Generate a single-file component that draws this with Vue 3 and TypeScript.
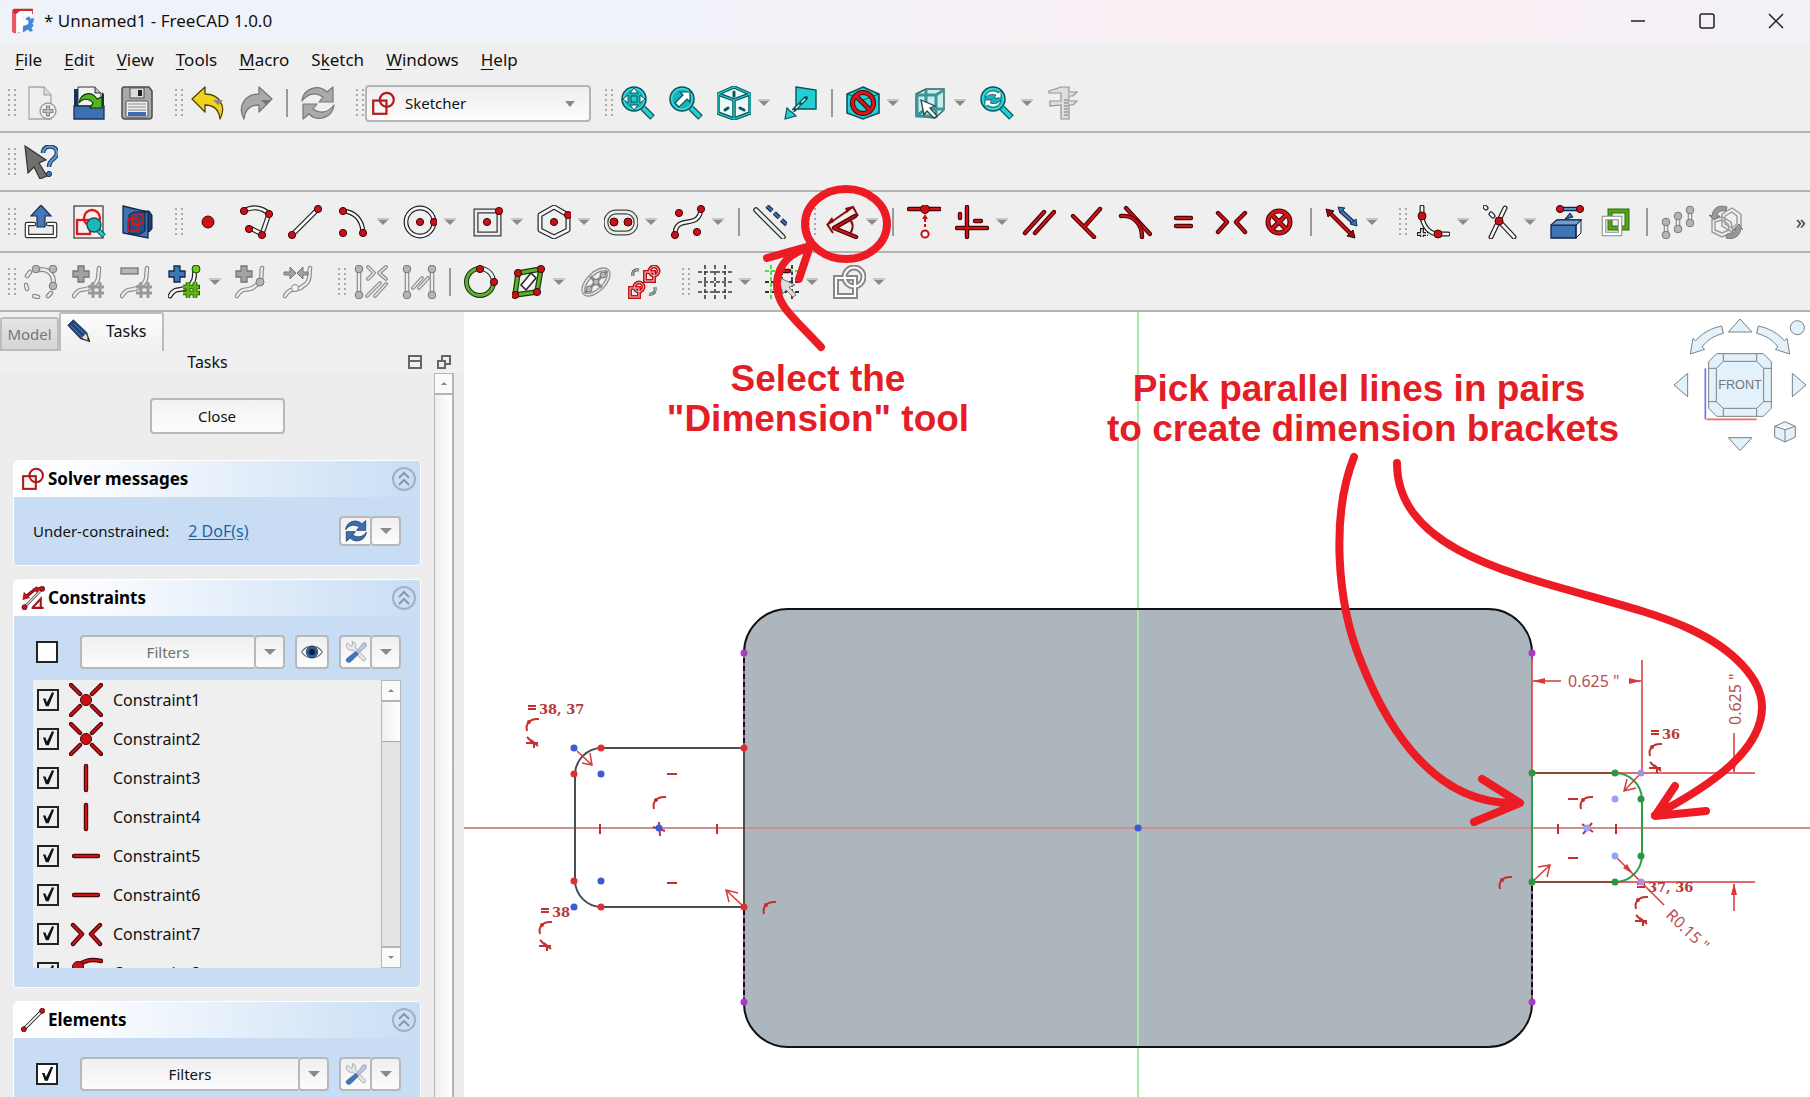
<script setup lang="ts">
import { ref } from 'vue'

type Tool =
  | { kind: 'grip' }
  | { kind: 'sep' }
  | { kind: 'combo' }
  | { kind: 'tool'; icon: string; label: string; menu?: boolean }

const grip: Tool = { kind: 'grip' }
const sep: Tool = { kind: 'sep' }
const tool = (icon: string, label: string, menu = false): Tool => ({ kind: 'tool', icon, label, menu })

// Drawing helpers shared by the icon set (34 x 34 grid)
const RED = '#cc1016'
const GRAY = '#a3a3a3'
const TEAL = '#22cfd4'
const DTEAL = '#0b5458'
const tube = (d: string, fill = '#f6f6f6', edge = '#222', w = 5) =>
  `<g fill="none" stroke-linecap="round" stroke-linejoin="round"><path d="${d}" stroke="${edge}" stroke-width="${w}"/><path d="${d}" stroke="${fill}" stroke-width="${w - 2.4}"/></g>`
const dot = (x: number, y: number, r = 3.6, fill = RED, edge = '#3a0608') =>
  `<circle cx="${x}" cy="${y}" r="${r}" fill="${fill}" stroke="${edge}" stroke-width="1"/>`
const bar = (d: string) => tube(d, '#cc1318', '#4d0407', 4.4)
const lens = `<path d="M22 22L31.500 31.500" stroke="${DTEAL}" stroke-width="6.500"/><path d="M22 22L30.800 30.800" stroke="${TEAL}" stroke-width="4"/><circle cx="13" cy="13" r="12" fill="${TEAL}" stroke="${DTEAL}" stroke-width="1.500"/><circle cx="13" cy="13" r="10.200" fill="#17b3b8" stroke="#7ff" stroke-opacity=".5"/>`
const cycle = (fill: string, edge: string) =>
  `<g fill="${fill}" stroke="${edge}" stroke-width="1.200" stroke-linejoin="round"><path d="M1 15C2 3 17-3 26 6L32 1V16H18L22 11C15 6 7 7 1 15Z"/><path d="M33 19C32 31 17 37 8 28L2 33V18H16L12 23C19 28 27 27 33 19Z"/></g>`
const grid = (fill: string, x: number, y: number) =>
  `<g transform="translate(${x} ${y})" stroke="${fill}" stroke-width="3"><path d="M5 0V16M12 0V16M0 5H16M0 11H16"/></g>`
const curve = 'M2 31C8 20 14 28 20 21C28 17 26 10 27 3'
const plus = (fill: string, edge: string) =>
  `<path d="M6 1H12V6H17V12H12V17H6V12H1V6H6Z" fill="${fill}" stroke="${edge}" stroke-width="1.300"/>`
const gdot = (x: number, y: number, r = 3.8) => dot(x, y, r, '#b5b5b5', '#777')
const gtube = (d: string, w = 4.6) => tube(d, '#ededed', '#8d8d8d', w)
const sketcher = `<g fill="none" stroke="#b41a1e" stroke-width="3"><rect x="3" y="13" width="18" height="18"/><circle cx="21.500" cy="12" r="9.500"/></g>`

const icons: Record<string, string> = {
  app: `<path d="M3 4Q3 1 6 1H30V8L24 9H13V32H5Q3 32 3 29Z" fill="#cb2b33"/><path d="M3 28V5L9 9V33H6Q3 33 3 28Z" fill="#f0575f"/><path d="M8 8L13 4H29V10H16V16H24V22H16V30L8 33Z" fill="#fff"/><path d="M21 13L25 11L27 14L31 13V18L29 20L31 23L28 26L30 30L26 31L24 28L20 30L17 32V24L24 21V16H21Z" fill="#3f86dc"/>`,
  fileNew: `<path d="M5 1H20L27 9V33H5Z" fill="#eee" stroke="#a8a8a8" stroke-width="1.300"/><path d="M20 1V9H27" fill="#ddd" stroke="#999"/><circle cx="24" cy="25" r="8" fill="#eee" stroke="#999" stroke-width="1.300"/><path d="M18.500 25H29.500M24 19.500V30.500" stroke="#888" stroke-width="4"/><path d="M19.500 25H28.500M24 20.500V29.500" stroke="#ccc" stroke-width="1.500"/>`,
  open: `<path d="M2 3H7V33H2Z" fill="#16335d"/><path d="M30 6L32 8V33H2V18H30Z" fill="#16335d"/><path d="M6 1H23L29 7V20H6Z" fill="#f2f2f2" stroke="#333"/><path d="M23 1V7H29" fill="#bbb" stroke="#333"/><path d="M2 20H32V33H2Z" fill="#3d70b0" stroke="#16335d" stroke-width="1.300"/><path d="M7 17C9 6 20 5 25 13L30 11V22H18L21 17C17 12 11 12 7 17Z" fill="#55b31e" stroke="#123a05" stroke-width="1.200"/>`,
  save: `<path d="M4 1H29L32 5V30Q32 33 29 33H5Q2 33 2 30V4Q2 1 4 1Z" fill="#a9aaa6" stroke="#4c4d4b" stroke-width="1.500"/><rect x="10" y="2" width="14" height="10" fill="#ddd" stroke="#555"/><rect x="18" y="4" width="4" height="6" fill="#222"/><rect x="6" y="15" width="22" height="16" rx="1" fill="#eee" stroke="#555"/><path d="M8 18H26M8 21H26M8 24H26" stroke="#888"/><rect x="8" y="26" width="18" height="4" fill="#3a6cb5"/>`,
  undo: `<path d="M1 13L14 1V8C28 8 36 20 29 33C28 24 23 19 14 19V26Z" fill="#f0d21f" stroke="#4f4306" stroke-width="1.300" stroke-linejoin="round"/><path d="M22 14H32L27 19Z" fill="#888"/>`,
  redo: `<path d="M33 13L20 1V8C6 8-2 20 5 33C6 24 11 19 20 19V26Z" fill="#a9a9a9" stroke="#777" stroke-width="1.300" stroke-linejoin="round"/><path d="M22 14H32L27 19Z" fill="#777"/>`,
  refresh: cycle('#aaa', '#777'),
  recompute: cycle('#3d6fae', '#173a68'),
  fit: lens + `<path d="M13 2L17 7H9ZM13 24L17 19H9ZM2 13L7 9V17ZM24 13L19 9V17Z" fill="#fff" stroke="${DTEAL}"/><path d="M10 10H16V16H10Z" fill="${TEAL}" stroke="${DTEAL}"/>`,
  fitSel: lens + `<path d="M6 17L14 9L11 6H21V16L18 13L10 21Z" fill="#fff" stroke="${DTEAL}" stroke-width="1.200"/>`,
  axo: `<path d="M17 1L33 8V27L17 33L1 27V8Z" fill="#eafafa" stroke="${DTEAL}" stroke-width="3.500" stroke-linejoin="round"/><path d="M1 8L17 14L33 8M17 14V33" fill="none" stroke="${DTEAL}" stroke-width="3.500"/><path d="M17 1L33 8V27L17 33L1 27V8ZM1 8L17 14L33 8M17 14V33" fill="none" stroke="${TEAL}" stroke-width="1.300"/><path d="M17 6V10M8 24L11 22M23 22L27 24" stroke="${DTEAL}" stroke-width="3" stroke-linecap="round"/>`,
  go: `<path d="M12 1L32 4V23H12Z" fill="${TEAL}" stroke="${DTEAL}" stroke-width="1.400"/><path d="M22 12L17 17M15 19L10 24" stroke="${DTEAL}" stroke-width="4" stroke-linecap="round"/><path d="M21 13L8 26" stroke="#bff" stroke-width="1.500" stroke-dasharray="5 3"/><path d="M3 22L1 33L12 30L9 27L6 25Z" fill="${TEAL}" stroke="${DTEAL}" stroke-width="1.200"/>`,
  noDraw: `<path d="M17 1L33 8V27L17 33L1 27V8Z" fill="${TEAL}" stroke="${DTEAL}" stroke-width="1.600"/><path d="M1 8L17 14L33 8" fill="none" stroke="${DTEAL}"/><g fill="none"><circle cx="17" cy="17" r="10.500" stroke="#400" stroke-width="5"/><path d="M10 10L24 24" stroke="#400" stroke-width="5"/><circle cx="17" cy="17" r="10.500" stroke="#d8171c" stroke-width="3"/><path d="M10 10L24 24" stroke="#d8171c" stroke-width="3"/></g>`,
  box: `<path d="M3 8L13 3H31V24L22 32L3 30Z" fill="#c9ecec" stroke="#2b6669" stroke-width="1.400"/><path d="M3 9H23V32M23 9L31 4M13 4V23L3 30M13 23H31M4 10V30H22" fill="none" stroke="#3f9496" stroke-width="3"/><path d="M8 14L22 20L17 22L24 30L21 32L14 25L11 29Z" fill="#fff" stroke="#20494b" stroke-width="1.300"/>`,
  sync: lens + `<g fill="#fff" stroke="${DTEAL}" stroke-width=".8"><path d="M5 12C6 5 14 3 18 7L21 5V12H14L16 9C12 8 8 8 5 12Z"/><path d="M21 14C20 21 12 23 8 19L5 21V14H12L10 17C14 18 18 18 21 14Z"/></g>`,
  caliper: `<g fill="#dedede" stroke="#949494" stroke-width="1.200"><path d="M2 5L14 1H22V33H14V19L3 20V15H14V7H2Z"/><path d="M22 6H30L26 10H22M22 15H30L26 19H22"/></g><path d="M17 14H21M17 17H21M17 20H21M17 23H21M17 26H21M17 29H21" stroke="#777"/>`,
  whats: `<path d="M1 1L22 15L15 18L23 31L16 34L10 22L4 28Z" fill="#6f706d" stroke="#333" stroke-width="1.200"/><path d="M19 8C19-1 33 0 33 8C33 15 25 13 25 22" fill="none" stroke="#17365f" stroke-width="4.500"/><path d="M19 8C19-1 33 0 33 8C33 15 25 13 25 22" fill="none" stroke="#5c93d0" stroke-width="2.400"/><circle cx="25" cy="29" r="2.600" fill="#3f76b8" stroke="#17365f"/>`,
  leave: tube('M10 19H3V31H31V19H24', '#fff', '#333', 4.6) + `<path d="M17 0L27 11H21V22H13V11H7Z" fill="#4478b8" stroke="#152f54" stroke-width="1.200"/>`,
  viewSketch: `<rect x="2" y="1" width="29" height="32" fill="#f6f1ee" stroke="#444" stroke-width="1.300"/><g fill="none" stroke="#e0171c" stroke-width="2.300"><rect x="5" y="15" width="13" height="14"/><circle cx="20" cy="13" r="8"/></g><path d="M25 24L32 31" stroke="${DTEAL}" stroke-width="5"/><path d="M25 24L31.500 30.500" stroke="${TEAL}" stroke-width="3"/><circle cx="22" cy="20" r="7" fill="#1fb6ba" stroke="${DTEAL}" stroke-width="1.300"/>`,
  mapSketch: `<path d="M22 6H29L32 10V24L29 27H22Z" fill="#1c3f70" stroke="#0c1f3c"/><path d="M3 1L28 7V33L3 28Z" fill="#3f72b2" stroke="#13294b" stroke-width="1.300"/><path d="M9 10L14 7H25V26L20 29H9Z" fill="#244e86" stroke="#0c1f3c"/><g fill="none" stroke="#d8171c" stroke-width="1.700"><rect x="8" y="14" width="10" height="12"/><circle cx="18" cy="14" r="5.500"/><path d="M13 10V20H22"/></g>`,
  point: dot(16, 17, 6),
  polyline: tube('M4 6C12 1 22 2 29 9L22 29L10 23') + dot(4, 6) + dot(29, 9) + dot(22, 30) + dot(9, 24),
  line: tube('M4 30L30 4') + dot(4, 30) + dot(30, 4),
  arc: tube('M7 6C20 7 26 16 27 27') + dot(7, 6) + dot(27, 28) + dot(7, 28),
  circle: `<circle cx="17" cy="17" r="14" fill="none" stroke="#222" stroke-width="4.800"/><circle cx="17" cy="17" r="14" fill="none" stroke="#f6f6f6" stroke-width="2.400"/>` + dot(17, 17) + dot(31, 17),
  rect: `<rect x="6" y="6" width="23" height="23" fill="none" stroke="#333" stroke-width="5"/><rect x="6" y="6" width="23" height="23" fill="none" stroke="#eee" stroke-width="2.600"/>` + dot(17, 17) + dot(29, 6),
  hex: tube('M17 2L31 10V25L17 32L3 25V10Z') + dot(17, 17) + dot(31, 10),
  slot: `<rect x="2" y="7" width="30" height="21" rx="10" fill="none" stroke="#3d4a3d" stroke-width="5"/><rect x="2" y="7" width="30" height="21" rx="10" fill="none" stroke="#eee" stroke-width="2.600"/>` + dot(10, 17, 4) + dot(24, 17, 4),
  bspline: tube('M4 30C4 8 28 26 30 4') + dot(4, 30) + dot(30, 4) + dot(8, 8) + dot(26, 27),
  construct: tube('M3 5L30 32', '#eef3ee', '#2a332a', 5.5) + `<path d="M14 1L34 20" stroke="#14294a" stroke-width="4.500" stroke-dasharray="7 3"/><path d="M14 1L34 20" stroke="#3d6fae" stroke-width="2.200" stroke-dasharray="7 3"/>`,
  dimension: bar('M31 32L9 23L30 11') + `<g fill="none" stroke="#8d0b10" stroke-width="2"><path d="M2 20L28 2L33 11M2 19L8 28"/><path d="M24 14C29 18 28 24 25 29"/></g><path d="M1 20L7 12L9 17ZM28 1L22 8L20 3Z" fill="#8d0b10"/>`,
  distance: bar('M2 4H33') + dot(18, 4, 4.5) + `<path d="M18 9L21 14H15Z" fill="${RED}"/><path d="M18 14V24" stroke="${RED}" stroke-width="2" stroke-dasharray="3 2"/><circle cx="18" cy="29" r="3.600" fill="#fff" stroke="${RED}" stroke-width="2"/>`,
  hv: bar('M12 2V32M2 23H32') + bar('M5 9V13M20 16H26'),
  parallel: bar('M3 28L22 7M13 28L32 7'),
  perp: bar('M3 11L24 32M14 22L30 4'),
  tangent: bar('M8 3L32 29') + bar('M3 11C15 10 24 18 24 32'),
  equal: bar('M10 13H25M10 21H25'),
  symmetric: bar('M4 8L13 17L4 27M31 8L22 17L31 27'),
  block: `<circle cx="17" cy="17" r="11" fill="none" stroke="#4d0407" stroke-width="5"/><path d="M10 10L24 24M24 10L10 24" stroke="#4d0407" stroke-width="5"/><circle cx="17" cy="17" r="11" fill="none" stroke="#d3151a" stroke-width="2.800"/><path d="M10 10L24 24M24 10L10 24" stroke="#d3151a" stroke-width="2.800"/>`,
  driving: `<path d="M6 9L25 28" stroke="#5d0508" stroke-width="4.500"/><path d="M5 8L26 29" stroke="#c3151a" stroke-width="2"/><path d="M1 4L9 6L3 12ZM30 33L28 25L22 31Z" fill="#9b0c10" stroke="#400"/><path d="M16 6L29 18" stroke="#16335d" stroke-width="4.500"/><path d="M16 6L29 18" stroke="#4a7cc0" stroke-width="2"/><path d="M13 2L20 3L15 8ZM32 21L31 14L25 19Z" fill="#3d6fae" stroke="#16335d"/>`,
  fillet: tube('M6 2V11C7 22 14 29 22 29H32') + `<path d="M6 23V33M1 29H12" stroke="#222" stroke-width="4" stroke-dasharray="4 1"/><path d="M6 24V32M2 29H12" stroke="#eee" stroke-width="1.500"/>` + dot(6, 11, 4) + dot(22, 29, 4),
  trim: tube('M22 3L8 32M16 16L31 32') + tube('M2 2L3 3M8 9L10 11') + dot(16, 16, 4),
  external: `<path d="M1 20L7 15H31L26 20V33H1Z" fill="#3f74b6" stroke="#10233f" stroke-width="1.300"/><path d="M1 20H26V33L31 28V15" fill="none" stroke="#10233f"/><path d="M1 20L7 15H31L26 20Z" fill="#6d9fd6" stroke="#10233f"/>` + tube('M12 4H29', '#5c8fcf', '#10233f', 4.6) + dot(10, 4) + dot(30, 4) + `<path d="M15 14L20 8L23 12Z" fill="#3d6fae" stroke="#10233f"/>`,
  carbon: `<rect x="12" y="6" width="17" height="17" fill="none" stroke="#2f6c0a" stroke-width="5"/><rect x="12" y="6" width="17" height="17" fill="none" stroke="#55a318" stroke-width="3"/><rect x="6" y="13" width="16" height="16" fill="none" stroke="#828c86" stroke-width="4.500"/><rect x="6" y="13" width="16" height="16" fill="none" stroke="#fff" stroke-width="2.500"/>`,
  offset: gtube('M5 17V30M17 11V24M29 5V18') + gdot(5, 17) + gdot(5, 30) + gdot(17, 11) + gdot(17, 24) + gdot(29, 5) + gdot(29, 18),
  rotate: `<g fill="none" stroke="#999" stroke-width="1.400"><path d="M13 9L23 3L32 9V21L23 27L13 21Z"/><path d="M16 11L23 7L28 11V19L23 23L16 19Z"/><path d="M3 14L13 12L22 17L24 27L13 32L3 27Z"/><path d="M6 17L13 15L19 19L20 25L13 28L6 25Z"/></g><path d="M3 11C4 1 12 0 18 2L17 6C11 5 9 7 8 11L11 11L5 15L0 10ZM32 23C31 32 24 35 17 33L18 29C23 30 26 28 27 24L24 25L30 19L34 25Z" fill="#999" stroke="#777"/>`,
  reshape: `<path d="M13 5C27 2 33 14 27 24" fill="none" stroke="#8d8d8d" stroke-width="5"/><path d="M13 5C27 2 33 14 27 24" fill="none" stroke="#eee" stroke-width="2.500"/>` + gtube('M3 11L6 7M2 20L3 24M10 31L14 32M24 31L27 28') + gdot(12, 4) + gdot(29, 4) + gdot(29, 21),
  knotAdd: gtube(curve) + plus(GRAY, '#777') + grid('#999', 16, 17),
  knotDel: gtube(curve) + `<rect x="1" y="3" width="17" height="6" fill="#b5b5b5" stroke="#777" stroke-width="1.300"/>` + grid('#999', 16, 17),
  knotIns: tube(curve) + plus('#3f76b8', '#14294a') + `<g transform="translate(15 17)" stroke="#1d4a03" stroke-width="4.500"><path d="M5 0V16M12 0V16M0 5H17M0 11H17"/></g>` + grid('#5cb615', 15, 17) + dot(28, 4, 4, '#6ccb1f', '#1d4a03'),
  knotIn2: gtube(curve) + plus(GRAY, '#777') + gdot(25, 17, 4),
  join: gtube(curve) + `<path d="M1 7H7V2L13 8L7 14V10H1ZM25 7H20V2L14 8L20 14V10H25Z" fill="${GRAY}" stroke="#777"/><circle cx="12" cy="23" r="3.500" fill="#f4f4f4" stroke="#888"/>`,
  selCon: gtube('M5 5V30') + gdot(5, 4) + gdot(5, 30) + gtube('M14 2L20 8L14 14M32 2L25 8L32 14M13 31L26 18M21 31L32 19', 3.8),
  selGeo: gtube('M5 5V30M30 5V30') + gdot(5, 4) + gdot(5, 30) + gdot(30, 4) + gdot(30, 30) + gtube('M11 23L20 13M17 23L26 13', 3.8),
  circular: `<circle cx="16" cy="17" r="13.500" fill="none" stroke="#1f2a1f" stroke-width="5"/><circle cx="16" cy="17" r="13.500" fill="none" stroke="#5cb02a" stroke-width="3"/><path d="M17 3.500A13.500 13.500 0 0 1 29.500 17" fill="none" stroke="#eee" stroke-width="2.800"/>` + dot(16, 4) + dot(30, 17),
  rectSel: tube('M6 8L29 4L25 27L3 30Z', '#5cb02a', '#1a3a08', 5.5) + `<path d="M9 20L19 8L24 13L14 25Z" fill="#fff" stroke="#222" stroke-width="1.500"/>` + dot(6, 8) + dot(29, 4) + dot(25, 27) + dot(3, 30),
  ellipse: `<g transform="rotate(-45 17 17)"><ellipse cx="17" cy="17" rx="16" ry="8" fill="none" stroke="#888" stroke-width="4"/><ellipse cx="17" cy="17" rx="16" ry="8" fill="none" stroke="#e3e3e3" stroke-width="1.800"/><path d="M1 17H33M17 9V25" stroke="#888" stroke-width="3"/></g>` + gdot(10, 24, 3) + gdot(17, 17, 3) + gdot(24, 10, 3),
  swap: `<g fill="none" stroke="#c01419" stroke-width="4"><rect x="18" y="7" width="9" height="9"/><circle cx="27" cy="6" r="4.500"/><rect x="3" y="23" width="9" height="9"/><circle cx="12" cy="22" r="4.500"/></g><g fill="none" stroke="#f2c4c4" stroke-width="1"><rect x="18" y="7" width="9" height="9"/><circle cx="27" cy="6" r="4.500"/><rect x="3" y="23" width="9" height="9"/><circle cx="12" cy="22" r="4.500"/></g><path d="M12 5C7 4 5 7 6 11M22 29C27 30 29 26 28 22" fill="none" stroke="#4a5a56" stroke-width="3"/><path d="M12 5C7 4 5 7 6 11M22 29C27 30 29 26 28 22" fill="none" stroke="#dde5e2" stroke-width="1"/>`,
  gridOn: `<path d="M7 0V34M17 0V34M27 0V34M0 7H34M0 17H34M0 27H34" stroke="#3c3c3c" stroke-width="1.600" stroke-dasharray="4 2"/>`,
  snap: `<path d="M17 0V34M27 0V34M0 17H34M0 27H34" stroke="#333" stroke-width="1.800" stroke-dasharray="4 2"/><path d="M6 0V34M0 6H34" stroke="#4be04b" stroke-width="2" stroke-dasharray="4 2"/>` + bar('M16 6H24') + `<path d="M13 12L30 20L24 22L31 30L28 32L21 25L18 29Z" fill="#ddd" stroke="#777"/>`,
  render: `<g fill="none"><rect x="4" y="13" width="19" height="18" stroke="#888" stroke-width="6"/><circle cx="22" cy="12" r="9.500" stroke="#888" stroke-width="6"/><rect x="4" y="13" width="19" height="18" stroke="#fff" stroke-width="2"/><circle cx="22" cy="12" r="9.500" stroke="#fff" stroke-width="2"/></g>`,
  sketcher,
  constraints: bar('M6 16L22 3') + `<path d="M2 20L4 8L13 17ZM27 1L25 12L16 4Z" fill="#b8171b"/><path d="M5 30L30 4" stroke="#666" stroke-width="4"/><path d="M5 30L30 4" stroke="#ddd" stroke-width="1.500"/><path d="M15 31H32M16 31L28 18V31" stroke="#a8151a" stroke-width="3" fill="none"/>` + dot(5, 30) + dot(30, 4),
  coincident: bar('M2 2L11 11M32 2L23 11M2 32L11 23M32 32L23 23') + dot(17, 17, 5.5),
  vertical: bar('M17 5V29'),
  horizontal: bar('M5 17H29'),
  tangentPt: bar('M8 28L10 9C16 4 24 3 32 5') + dot(9, 11, 5.5),
  eye: `<path d="M1 17C9 5 25 5 33 17C25 29 9 29 1 17Z" fill="#fff" stroke="#666" stroke-width="1.800"/><circle cx="17" cy="17" r="9" fill="#2b5d9c" stroke="#16335d"/><circle cx="17" cy="17" r="4.500" fill="#0f2038"/>`,
  tools: `<path d="M4 3L9 8L12 6L11 1C16 2 18 6 16 10L31 26Q33 31 28 31L12 14C7 16 2 12 2 6Z" fill="#e6e6e6" stroke="#9a9a9a" stroke-width="1.200"/><path d="M32 3L28 3L19 15L22 18L33 8Z" fill="#b8cbe2" stroke="#789"/><path d="M17 16L21 20L9 32Q4 35 2 31Q1 28 4 26Z" fill="#3f76b8" stroke="#3a68a0"/>`,
  pencil: `<path d="M1 9L9 1L28 19L32 32L19 28Z" fill="#1e4478" stroke="#0f2748"/><path d="M5 9L22 26M9 6L26 22" stroke="#4775b0" stroke-width="1.500"/><path d="M20 27L27 20L32 32Z" fill="#e7ddd0" stroke="#222"/><path d="M28 28L31 27L32 32Z" fill="#111"/>`,
}

const rowFile: Tool[] = [
  grip, tool('fileNew', 'New'), tool('open', 'Open'), tool('save', 'Save'),
  grip, tool('undo', 'Undo'), tool('redo', 'Redo'), sep, tool('refresh', 'Refresh'),
  grip, { kind: 'combo' },
  grip, tool('fit', 'Fit all'), tool('fitSel', 'Fit selection'), tool('axo', 'Isometric', true), tool('go', 'Go to selection'),
  sep, tool('noDraw', 'Draw style', true), tool('box', 'Bounding box', true), tool('sync', 'Sync view', true), tool('caliper', 'Measure'),
]
const rowHelp: Tool[] = [grip, tool('whats', "What's this?")]
const rowSketch: Tool[] = [
  grip, tool('leave', 'Leave sketch'), tool('viewSketch', 'View sketch'), tool('mapSketch', 'View section'),
  grip, tool('point', 'Point'), tool('polyline', 'Polyline'), tool('line', 'Line'), tool('arc', 'Arc', true),
  tool('circle', 'Circle', true), tool('rect', 'Rectangle', true), tool('hex', 'Polygon', true), tool('slot', 'Slot', true),
  tool('bspline', 'B-spline', true), sep, tool('construct', 'Construction geometry'),
  grip, tool('dimension', 'Dimension', true), sep, tool('distance', 'Coincident'), tool('hv', 'Horizontal/vertical', true),
  tool('parallel', 'Parallel'), tool('perp', 'Perpendicular'), tool('tangent', 'Tangent'), tool('equal', 'Equal'),
  tool('symmetric', 'Symmetric'), tool('block', 'Block'), sep, tool('driving', 'Toggle driving', true),
  grip, tool('fillet', 'Fillet', true), tool('trim', 'Trim', true), tool('external', 'External geometry'), tool('carbon', 'Carbon copy'),
  sep, tool('offset', 'Move'), tool('rotate', 'Rotate'),
]
const rowSpline: Tool[] = [
  grip, tool('reshape', 'Geometry to B-spline'), tool('knotAdd', 'Increase degree'), tool('knotDel', 'Decrease degree'),
  tool('knotIns', 'Increase multiplicity', true), tool('knotIn2', 'Insert knot'), tool('join', 'Join curves'),
  grip, tool('selCon', 'Select constraints'), tool('selGeo', 'Select elements'), sep, tool('circular', 'Internal geometry'),
  tool('rectSel', 'Comb', true), tool('ellipse', 'Ellipse geometry'), tool('swap', 'Switch space'),
  grip, tool('gridOn', 'Grid', true), tool('snap', 'Snap', true), tool('render', 'Rendering order', true),
]
const toolbars = [
  { name: 'file', tools: rowFile },
  { name: 'help', tools: rowHelp },
  { name: 'sketch', tools: rowSketch },
  { name: 'spline', tools: rowSpline },
]

const menus = [
  ['', 'F', 'ile'], ['', 'E', 'dit'], ['', 'V', 'iew'], ['', 'T', 'ools'],
  ['', 'M', 'acro'], ['S', 'k', 'etch'], ['', 'W', 'indows'], ['', 'H', 'elp'],
]

const constraints = ref(
  ['coincident', 'coincident', 'vertical', 'vertical', 'horizontal', 'horizontal', 'symmetric', 'tangentPt'].map(
    (icon, i) => ({ icon, name: `Constraint${i + 1}`, on: true }),
  ),
)
const allConstraints = ref(false)
const allElements = ref(true)

type Dot = [number, number, string]
const dots: Dot[] = [
  [574, 774, '#dc2f2f'], [601, 748, '#dc2f2f'], [744, 748, '#dc2f2f'],
  [574, 881, '#dc2f2f'], [601, 907, '#dc2f2f'], [744, 907, '#dc2f2f'],
  [574, 748, '#3c5ad6'], [601, 774, '#3c5ad6'], [601, 881, '#3c5ad6'], [574, 907, '#3c5ad6'],
  [659, 828, '#3c5ad6'], [1138, 828, '#3c5ad6'],
  [744, 653, '#a63cc4'], [1532, 653, '#a63cc4'], [744, 1002, '#a63cc4'], [1532, 1002, '#a63cc4'],
  [1532, 773, '#2c9642'], [1615, 773, '#2c9642'], [1641, 799, '#2c9642'],
  [1641, 856, '#2c9642'], [1615, 882, '#2c9642'], [1532, 882, '#2c9642'],
  [1641, 773, '#a48fe0'], [1615, 799, '#95a3fa'], [1615, 856, '#95a3fa'], [1641, 882, '#b08fd8'], [1587, 828, '#95a3fa'],
]
const tangentMarks: [number, number][] = [
  [526, 718], [653, 796], [539, 921], [763, 901], [1649, 743], [1580, 796], [1499, 876], [1635, 896],
]
const crossMarks: [number, number][] = [[532, 741], [545, 944], [1655, 766], [1641, 919]]
const equalMarks: [number, number, string][] = [
  [528, 706, '38, 37'], [541, 909, '38'], [1651, 731, '36'], [1637, 884, '37, 36'],
]
</script>

<template>
  <div class="window">
    <header class="titlebar">
      <svg class="app-icon" viewBox="0 0 34 34" v-html="icons.app" />
      <h1>* Unnamed1 - FreeCAD 1.0.0</h1>
      <div class="win-buttons">
        <button aria-label="Minimize"><svg viewBox="0 0 16 16"><path d="M1 8H15" /></svg></button>
        <button aria-label="Maximize"><svg viewBox="0 0 16 16"><rect x="1" y="1" width="14" height="14" rx="2" /></svg></button>
        <button aria-label="Close window"><svg viewBox="0 0 16 16"><path d="M1 1L15 15M15 1L1 15" /></svg></button>
      </div>
    </header>

    <nav class="menubar">
      <button v-for="m in menus" :key="m.join('')">{{ m[0] }}<u>{{ m[1] }}</u>{{ m[2] }}</button>
    </nav>

    <div v-for="bar in toolbars" :key="bar.name" class="toolbar" :class="bar.name">
      <template v-for="(t, i) in bar.tools" :key="i">
        <span v-if="t.kind === 'grip'" class="grip" />
        <span v-else-if="t.kind === 'sep'" class="sep" />
        <div v-else-if="t.kind === 'combo'" class="combo">
          <svg viewBox="0 0 34 34" v-html="icons.sketcher" />
          <select aria-label="Workbench"><option>Sketcher</option></select>
          <svg class="combo-arrow" viewBox="0 0 12 8"><path d="M1 1H11L6 7Z" /></svg>
        </div>
        <template v-else>
          <button class="tool" :aria-label="t.label"><svg viewBox="0 0 34 34" v-html="icons[t.icon]" /></button>
          <button v-if="t.menu" class="drop" :aria-label="t.label + ' options'">
            <svg viewBox="0 0 12 8"><path class="cap" d="M0 0H12V2H0Z" /><path d="M1 2H11L6 7Z" /></svg>
          </button>
        </template>
      </template>
      <button v-if="bar.name === 'sketch'" class="more" aria-label="More tools">»</button>
    </div>

    <div class="workspace">
      <aside class="dock">
        <div class="tabs">
          <button class="tab">Model</button>
          <button class="tab active"><svg viewBox="0 0 34 34" v-html="icons.pencil" />Tasks</button>
        </div>
        <div class="dock-title">
          <span>Tasks</span>
          <button aria-label="Collapse"><svg viewBox="0 0 14 14"><path d="M1 1H13V13H1ZM1 6H13" /></svg></button>
          <button aria-label="Float"><svg viewBox="0 0 14 14"><path d="M1 6H8V13H1ZM5 5V1H13V9H9" /></svg></button>
        </div>
        <div class="dock-body">
          <div class="tasks">
            <button class="close">Close</button>

            <section class="panel">
              <div class="panel-head">
                <svg viewBox="0 0 34 34" v-html="icons.sketcher" />
                <h2>Solver messages</h2>
                <button class="fold" aria-label="Collapse solver messages"><svg viewBox="0 0 26 26"><circle cx="13" cy="13" r="11" /><path d="M8 12L13 7L18 12M8 19L13 14L18 19" /></svg></button>
              </div>
              <div class="solver">
                <span>Under-constrained:</span>
                <a href="#">2 DoF(s)</a>
                <div class="split small">
                  <button aria-label="Recompute"><svg viewBox="0 0 34 34" v-html="icons.recompute" /></button>
                  <button class="arrow" aria-label="Recompute options"><svg viewBox="0 0 12 8"><path d="M0 1H12L6 7Z" /></svg></button>
                </div>
              </div>
            </section>

            <section class="panel">
              <div class="panel-head">
                <svg viewBox="0 0 34 34" v-html="icons.constraints" />
                <h2>Constraints</h2>
                <button class="fold" aria-label="Collapse constraints"><svg viewBox="0 0 26 26"><circle cx="13" cy="13" r="11" /><path d="M8 12L13 7L18 12M8 19L13 14L18 19" /></svg></button>
              </div>
              <div class="filter-row">
                <input v-model="allConstraints" type="checkbox" aria-label="Filter constraints">
                <div class="split wide muted">
                  <button>Filters</button>
                  <button class="arrow" aria-label="Filter options"><svg viewBox="0 0 12 8"><path d="M0 1H12L6 7Z" /></svg></button>
                </div>
                <button class="square" aria-label="Show or hide"><svg viewBox="0 0 34 34" v-html="icons.eye" /></button>
                <div class="split small">
                  <button aria-label="Settings"><svg viewBox="0 0 34 34" v-html="icons.tools" /></button>
                  <button class="arrow" aria-label="More settings"><svg viewBox="0 0 12 8"><path d="M0 1H12L6 7Z" /></svg></button>
                </div>
              </div>
              <div class="list">
                <ul>
                  <li v-for="c in constraints" :key="c.name">
                    <label>
                      <input v-model="c.on" type="checkbox">
                      <svg viewBox="0 0 34 34" v-html="icons[c.icon]" />
                      {{ c.name }}
                    </label>
                  </li>
                </ul>
                <div class="scroll inner">
                  <span class="step up" />
                  <span class="thumb" />
                  <span class="step down" />
                </div>
              </div>
            </section>

            <section class="panel">
              <div class="panel-head">
                <svg viewBox="0 0 34 34" v-html="icons.line" />
                <h2>Elements</h2>
                <button class="fold" aria-label="Collapse elements"><svg viewBox="0 0 26 26"><circle cx="13" cy="13" r="11" /><path d="M8 12L13 7L18 12M8 19L13 14L18 19" /></svg></button>
              </div>
              <div class="filter-row">
                <input v-model="allElements" type="checkbox" aria-label="Filter elements">
                <div class="split wide">
                  <button>Filters</button>
                  <button class="arrow" aria-label="Element filter options"><svg viewBox="0 0 12 8"><path d="M0 1H12L6 7Z" /></svg></button>
                </div>
                <div class="split small">
                  <button aria-label="Element settings"><svg viewBox="0 0 34 34" v-html="icons.tools" /></button>
                  <button class="arrow" aria-label="More element settings"><svg viewBox="0 0 12 8"><path d="M0 1H12L6 7Z" /></svg></button>
                </div>
              </div>
            </section>
          </div>
          <div class="scroll">
            <span class="step up" />
            <span class="thumb" />
          </div>
        </div>
      </aside>

      <main class="view">
        <svg class="scene" viewBox="464 312 1346 785">
          <!-- solid body -->
          <path d="M744 653A44 44 0 0 1 788 609H1488A44 44 0 0 1 1532 653V1002A44 44 0 0 1 1488 1047H788A44 44 0 0 1 744 1002Z" fill="#adb5bd" />
          <path d="M464 828H1810" stroke="#cf8f8f" stroke-width="2" />
          <path d="M1138 312V1097" stroke="#a5eba5" stroke-width="2" />
          <path d="M744 653A44 44 0 0 1 788 609H1488A44 44 0 0 1 1532 653M1532 1002A44 44 0 0 1 1488 1047H788A44 44 0 0 1 744 1002" fill="none" stroke="#111" stroke-width="2" />
          <path d="M744 653V748M744 907V1002M1532 653V660M1532 882V1002" stroke="#a63cc4" stroke-width="2" />
          <path d="M744 658V748M744 910V1002M1532 886V1002" stroke="#111" stroke-width="2" stroke-dasharray="5 3" />
          <!-- left tab -->
          <path d="M744 748H601A27 27 0 0 0 575 774V881A27 27 0 0 0 601 907H744V748" fill="none" stroke="#474d54" stroke-width="2" />
          <!-- right tab -->
          <g fill="none" stroke="#2f9e48" stroke-width="2">
            <path d="M1532 773V882M1615 773A27 27 0 0 1 1642 799V856A27 27 0 0 1 1615 882" />
          </g>
          <path d="M1532 773H1615M1532 882H1615" stroke="#8a4a30" stroke-width="2" />
          <!-- dimensions -->
          <g class="dims">
            <path d="M1532 660V773M1642 660V773M1615 773H1755M1615 882H1755M1533 681H1561M1629 681H1641M1734 733V772M1734 911V884M1615 856L1664 905" />
            <path class="head" d="M1533 681L1545 678V684ZM1641 681L1629 678V684ZM1734 773L1731 761H1737ZM1734 883L1731 895H1737ZM1633 874L1623 868L1627 864Z" />
            <path d="M577 751L592 765M582 763L592 765L590 753M744 907L726 890M738 893L726 890L729 902M1641 773L1625 790M1627 779L1624 791L1636 788M1532 882L1550 865M1538 867L1550 865L1547 877" />
          </g>
          <g class="dim-text">
            <text x="1568" y="687">0.625 "</text>
            <text transform="translate(1741 725) rotate(-90)">0.625 "</text>
            <text transform="translate(1665 916) rotate(44)">R0.15 "</text>
          </g>
          <!-- constraint markers -->
          <path class="marks" d="M667 774H677M667 883H677M600 824V834M717 824V834M1568 799H1578M1568 858H1578M1558 824V834M1616 824V834" />
          <path class="marks thin" d="M653 827L665 831M659 822L660 836M1582 824L1593 832M1592 823L1583 834" />
          <g v-for="([x, y], i) in tangentMarks" :key="'t' + i" class="marks">
            <path :transform="`translate(${x} ${y})`" d="M1 13C-1 6 4 0 13 1" />
            <circle :cx="x + 3" :cy="y + 4" r="1" />
          </g>
          <path v-for="([x, y], i) in crossMarks" :key="'x' + i" class="marks" :transform="`translate(${x - 6} ${y - 5})`" d="M1 1L8 8M0 7H12M5 4L12 10M8 6V12" />
          <g v-for="([x, y, s], i) in equalMarks" :key="'e' + i">
            <path class="marks" :transform="`translate(${x} ${y})`" d="M0 0H8M0 3H8" />
            <text class="mark-text" :x="x + 11" :y="y + 8">{{ s }}</text>
          </g>
          <circle v-for="([x, y, c], i) in dots" :key="'d' + i" :cx="x" :cy="y" r="3.500" :fill="c" />
          <!-- navigation cube -->
          <svg x="1640" y="305" width="170" height="160" viewBox="0 0 510 480" class="cube">
            <path d="M230 146H370L394 170V310L370 334H230L206 310V170Z" />
            <path d="M250 146V169M350 146V169M250 334V310M350 334V310M206 190H229M371 190H394M206 290H229M371 290H394" />
            <path d="M250 169H350L371 190V290L350 310H250L229 290V190Z" />
            <path d="M265 81L300 42L336 81ZM265 398H336L300 437ZM102 240L143 205V275ZM498 240L457 205V275Z" />
            <circle cx="472" cy="68" r="21" />
            <path d="M435 350L466 364V396L435 411L404 396V364ZM404 364L435 374L466 364M435 374V411" />
            <path d="M245 63L250 85C222 92 202 105 186 126L194 133L151 147L159 100L167 107C187 84 212 70 245 63Z" />
            <path d="M355 63L350 85C378 92 398 105 414 126L406 133L449 147L441 100L433 107C413 84 388 70 355 63Z" />
            <path d="M196 190V343" stroke="#7a6cff" stroke-width="5" />
            <path d="M199 343H350" stroke="#ff6565" stroke-width="5" />
            <text x="300" y="253" text-anchor="middle">FRONT</text>
          </svg>
        </svg>
      </main>
    </div>

    <svg class="notes" viewBox="0 0 1810 1097">
      <g class="strokes">
        <ellipse cx="846" cy="224" rx="41" ry="35" />
        <path d="M821 347C792 316 776 305 777 283C778 265 790 253 808 248M767 258L810 246L799 279" />
        <path d="M1354 457C1332 512 1335 600 1362 664C1388 730 1436 806 1518 803M1482 779L1520 803L1474 822" />
        <path d="M1397 463C1397 575 1590 583 1690 629C1735 650 1762 680 1762 707C1762 750 1712 785 1655 815M1675 786L1655 816L1706 811" />
      </g>
      <g class="captions">
        <text x="818" y="391">Select the</text>
        <text x="818" y="431">"Dimension" tool</text>
        <text x="1359" y="401">Pick parallel lines in pairs</text>
        <text x="1363" y="441">to create dimension brackets</text>
      </g>
    </svg>
  </div>
</template>

<style>
body {
  margin: 0;
}
</style>

<style scoped>
.window {
  position: relative;
  display: flex;
  flex-direction: column;
  height: 100vh;
  overflow: hidden;
  background: #efefef;
  color: #111;
  font: 15px/20px "Noto Sans", "Open Sans", sans-serif;
}
button {
  margin: 0;
  padding: 0;
  border: 0;
  background: none;
  color: inherit;
  font: inherit;
}
svg {
  display: block;
  flex: none;
}
.titlebar {
  display: flex;
  flex: none;
  align-items: center;
  box-sizing: border-box;
  height: 43px;
  padding: 0 0 2px 10px;
  border-top-left-radius: 8px;
  background: linear-gradient(90deg, #f0f2f9 0, #f1f2f9 40%, #f9eff4 65%, #f9eff5 82%, #f3f1f8 100%);
}
.app-icon {
  width: 26px;
  height: 26px;
}
h1 {
  flex: 1;
  margin: 0 0 0 8px;
  font-size: 17px;
  font-weight: 400;
}
.win-buttons {
  display: flex;
}
.win-buttons button {
  display: grid;
  width: 69px;
  height: 40px;
  place-items: center;
}
.win-buttons svg {
  width: 16px;
  height: 16px;
  fill: none;
  stroke: #222;
  stroke-width: 1.5px;
}
.menubar {
  display: flex;
  flex: none;
  gap: 22px;
  align-items: center;
  height: 34px;
  padding-left: 15px;
  font-size: 17px;
}
.menubar u {
  text-underline-offset: 3px;
}
.toolbar {
  display: flex;
  flex: none;
  align-items: center;
  box-sizing: border-box;
  border-bottom: 2px solid #b3b3b3;
}
.file {
  height: 56px;
  padding-bottom: 2px;
}
.help,
.spline {
  height: 59px;
}
.sketch {
  height: 61px;
}
.grip {
  flex: none;
  width: 8px;
  height: 28px;
  margin: 0 1px 0 14px;
  background: radial-gradient(circle at 1px 1px, #aaa 1px, transparent 1px) 0 0 / 6px 5px;
}
.sketch .grip {
  margin-right: 2px;
}
.toolbar .grip:first-child {
  margin: 0 1px 0 8px;
}
.sep {
  flex: none;
  width: 2px;
  height: 28px;
  margin: 0 6px;
  background: #9a9a9a;
}
.sketch .sep {
  margin-left: 7px;
}
.tool {
  flex: none;
  width: 48px;
  padding: 0 7px;
}
.tool svg {
  width: 34px;
  height: 34px;
}
.drop {
  flex: none;
  width: 19px;
}
.drop svg,
.arrow svg,
.combo-arrow {
  width: 12px;
  height: 8px;
  fill: #8a8a8a;
}
.drop .cap {
  fill: #c6c6c6;
}
.more {
  margin-left: auto;
  padding-right: 4px;
  font-size: 20px;
  color: #444;
}
.combo {
  position: relative;
  flex: none;
  width: 226px;
}
.combo select {
  appearance: none;
  box-sizing: border-box;
  width: 100%;
  height: 37px;
  padding: 0 30px 0 38px;
  border: 2px solid #b5b5b5;
  border-radius: 4px;
  background: linear-gradient(#eee, #fcfcfc);
  color: #111;
  font: inherit;
}
.combo svg {
  position: absolute;
  top: 6px;
  left: 6px;
  width: 25px;
  height: 25px;
}
.combo .combo-arrow {
  top: 15px;
  right: 15px;
  left: auto;
  width: 12px;
  height: 8px;
}
.workspace {
  display: flex;
  flex: 1;
  min-height: 0;
}
.dock {
  display: flex;
  flex: none;
  flex-direction: column;
  width: 464px;
}
.tabs {
  display: flex;
  flex: none;
  align-items: flex-end;
  height: 39px;
}
.tab {
  box-sizing: border-box;
  height: 34px;
  width: 59px;
  border: 2px solid #bdbdbd;
  border-radius: 3px 3px 0 0;
  background: linear-gradient(#e4e4e4, #d6d6d6);
  color: #777;
}
.tab.active {
  display: flex;
  gap: 15px;
  align-items: center;
  width: 105px;
  height: 39px;
  padding: 0 0 4px 6px;
  border-bottom: 0;
  background: linear-gradient(#fdfdfd, #efefef);
  color: #111;
  font-size: 16px;
}
.tab svg {
  width: 24px;
  height: 24px;
}
.dock-title {
  display: flex;
  flex: none;
  gap: 15px;
  align-items: center;
  height: 22px;
  padding: 0 13px 0 22px;
  font-size: 16px;
}
.dock-title span {
  flex: 1;
  text-align: center;
}
.dock-title svg {
  width: 14px;
  height: 14px;
  fill: none;
  stroke: #666;
  stroke-width: 2px;
}
.dock-body {
  display: flex;
  flex: 1;
  min-height: 0;
  padding-right: 10px;
  background: #ededed;
}
.tasks {
  display: flex;
  flex: 1;
  flex-direction: column;
  gap: 13px;
  padding: 25px 13px 0;
  overflow: hidden;
}
.close {
  flex: none;
  align-self: center;
  width: 135px;
  height: 36px;
  margin-bottom: 13px;
  border: 2px solid #b8b8b8;
  border-radius: 4px;
  background: linear-gradient(#f2f2f2, #fdfdfd);
}
.panel {
  flex: none;
  border: 1px solid #fff;
  border-radius: 4px;
  background: #c8ddf4;
}
.panel-head {
  display: flex;
  align-items: center;
  height: 36px;
  padding: 0 3px 0 7px;
  border-radius: 4px 4px 0 0;
  background: linear-gradient(90deg, #fff 0, #fafcff 20%, #c8ddf4 100%);
}
.panel-head > svg {
  width: 24px;
  height: 24px;
}
h2 {
  flex: 1;
  margin: 0 0 0 3px;
  font-size: 17px;
  font-weight: 700;
  color: #000;
}
.fold svg {
  width: 26px;
  height: 26px;
  fill: none;
  stroke: #a3b0bf;
  stroke-width: 2px;
}
.fold path {
  stroke: #8b96a2;
}
.solver {
  display: flex;
  align-items: center;
  height: 68px;
  padding: 0 19px;
}
.solver a {
  margin-left: 19px;
  color: #1766a8;
  font-size: 16px;
  text-underline-offset: 2px;
}
.solver .split {
  height: 30px;
  margin-left: auto;
}
.split {
  display: flex;
  height: 34px;
}
.split button,
.square {
  box-sizing: border-box;
  display: flex;
  align-items: center;
  justify-content: center;
  border: 2px solid #b5b9bd;
  border-radius: 4px;
  background: linear-gradient(#efefef, #fcfcfc);
}
.split button:first-child {
  flex: 1;
  border-right: 0;
  border-radius: 4px 0 0 4px;
}
.split .arrow {
  flex: none;
  width: 31px;
}
.split.small {
  width: 62px;
}
.small button svg:not(.arrow svg),
.square svg {
  width: 22px;
  height: 22px;
}
.split.wide {
  flex: 1;
  margin: 0 0 0 12px;
}
.muted {
  color: #707070;
}
.square {
  width: 34px;
  height: 34px;
}
.filter-row {
  display: flex;
  gap: 10px;
  align-items: center;
  padding: 19px 19px 11px 22px;
}
input[type="checkbox"] {
  appearance: none;
  flex: none;
  box-sizing: border-box;
  width: 22px;
  height: 22px;
  margin: 0;
  border: 2px solid #222;
  background: #fff;
}
input[type="checkbox"]:checked::after {
  display: block;
  width: 18px;
  height: 18px;
  background: #111;
  clip-path: polygon(22% 44%, 36% 44%, 44% 66%, 72% 10%, 84% 12%, 54% 88%, 38% 88%);
  content: "";
}
.list {
  display: flex;
  height: 288px;
  margin: 0 19px 19px;
  overflow: hidden;
  background: #efefef;
  font-size: 16px;
}
ul {
  flex: 1;
  margin: 0;
  padding: 0 0 0 4px;
  list-style: none;
}
label {
  display: flex;
  gap: 10px;
  align-items: center;
  height: 39px;
}
label input[type="checkbox"] {
  background: #efefef;
}
label svg {
  width: 34px;
  height: 34px;
}
.scroll {
  display: flex;
  flex: none;
  flex-direction: column;
  box-sizing: border-box;
  width: 20px;
  border: solid #b5b5b5;
  border-width: 1px 2px 0 1px;
  background: #e3e3e3;
}
.scroll.inner {
  border-width: 1px;
}
.step {
  display: grid;
  flex: none;
  height: 19px;
  place-items: center;
  background: #fafafa;
}
.step::before {
  border: solid transparent;
  border-width: 0 3px 3px;
  border-bottom-color: #888;
  content: "";
}
.step.down {
  margin-top: auto;
  border-top: 2px solid #b5b5b5;
}
.step.down::before {
  transform: rotate(180deg);
}
.thumb {
  flex: 1;
  border-top: 2px solid #b5b5b5;
  background: linear-gradient(90deg, #efefef, #fff);
}
.inner .thumb {
  flex: none;
  height: 39px;
  border-bottom: 1px solid #aaa;
}
.view {
  flex: 1;
  min-width: 0;
  background: #fff;
}
.scene {
  width: 100%;
  height: 100%;
}
.dims {
  fill: none;
  stroke: #d63a3a;
  stroke-width: 1.5px;
}
.dims .head {
  fill: #d63a3a;
  stroke: none;
}
.dim-text {
  fill: #b9504f;
  font-size: 16px;
}
.marks {
  fill: #c42f2f;
  stroke: #c42f2f;
  stroke-width: 2px;
}
.marks path,
path.marks {
  fill: none;
}
.mark-text {
  fill: #b43a38;
  font: bold 13px "DejaVu Serif", serif;
}
.cube {
  fill: #e3f1fb;
  stroke: #7a8086;
  stroke-width: 3px;
}
.cube text {
  fill: #72787e;
  stroke: none;
  font: 38px "Liberation Sans", sans-serif;
}
.notes {
  position: absolute;
  inset: 0;
  width: 100%;
  height: 100%;
  pointer-events: none;
}
.strokes {
  fill: none;
  stroke: #ed1c24;
  stroke-width: 8px;
  stroke-linecap: round;
  stroke-linejoin: round;
}
.captions {
  fill: #e31e26;
  font: bold 37px "Liberation Sans", Arial, sans-serif;
  text-anchor: middle;
}
</style>
